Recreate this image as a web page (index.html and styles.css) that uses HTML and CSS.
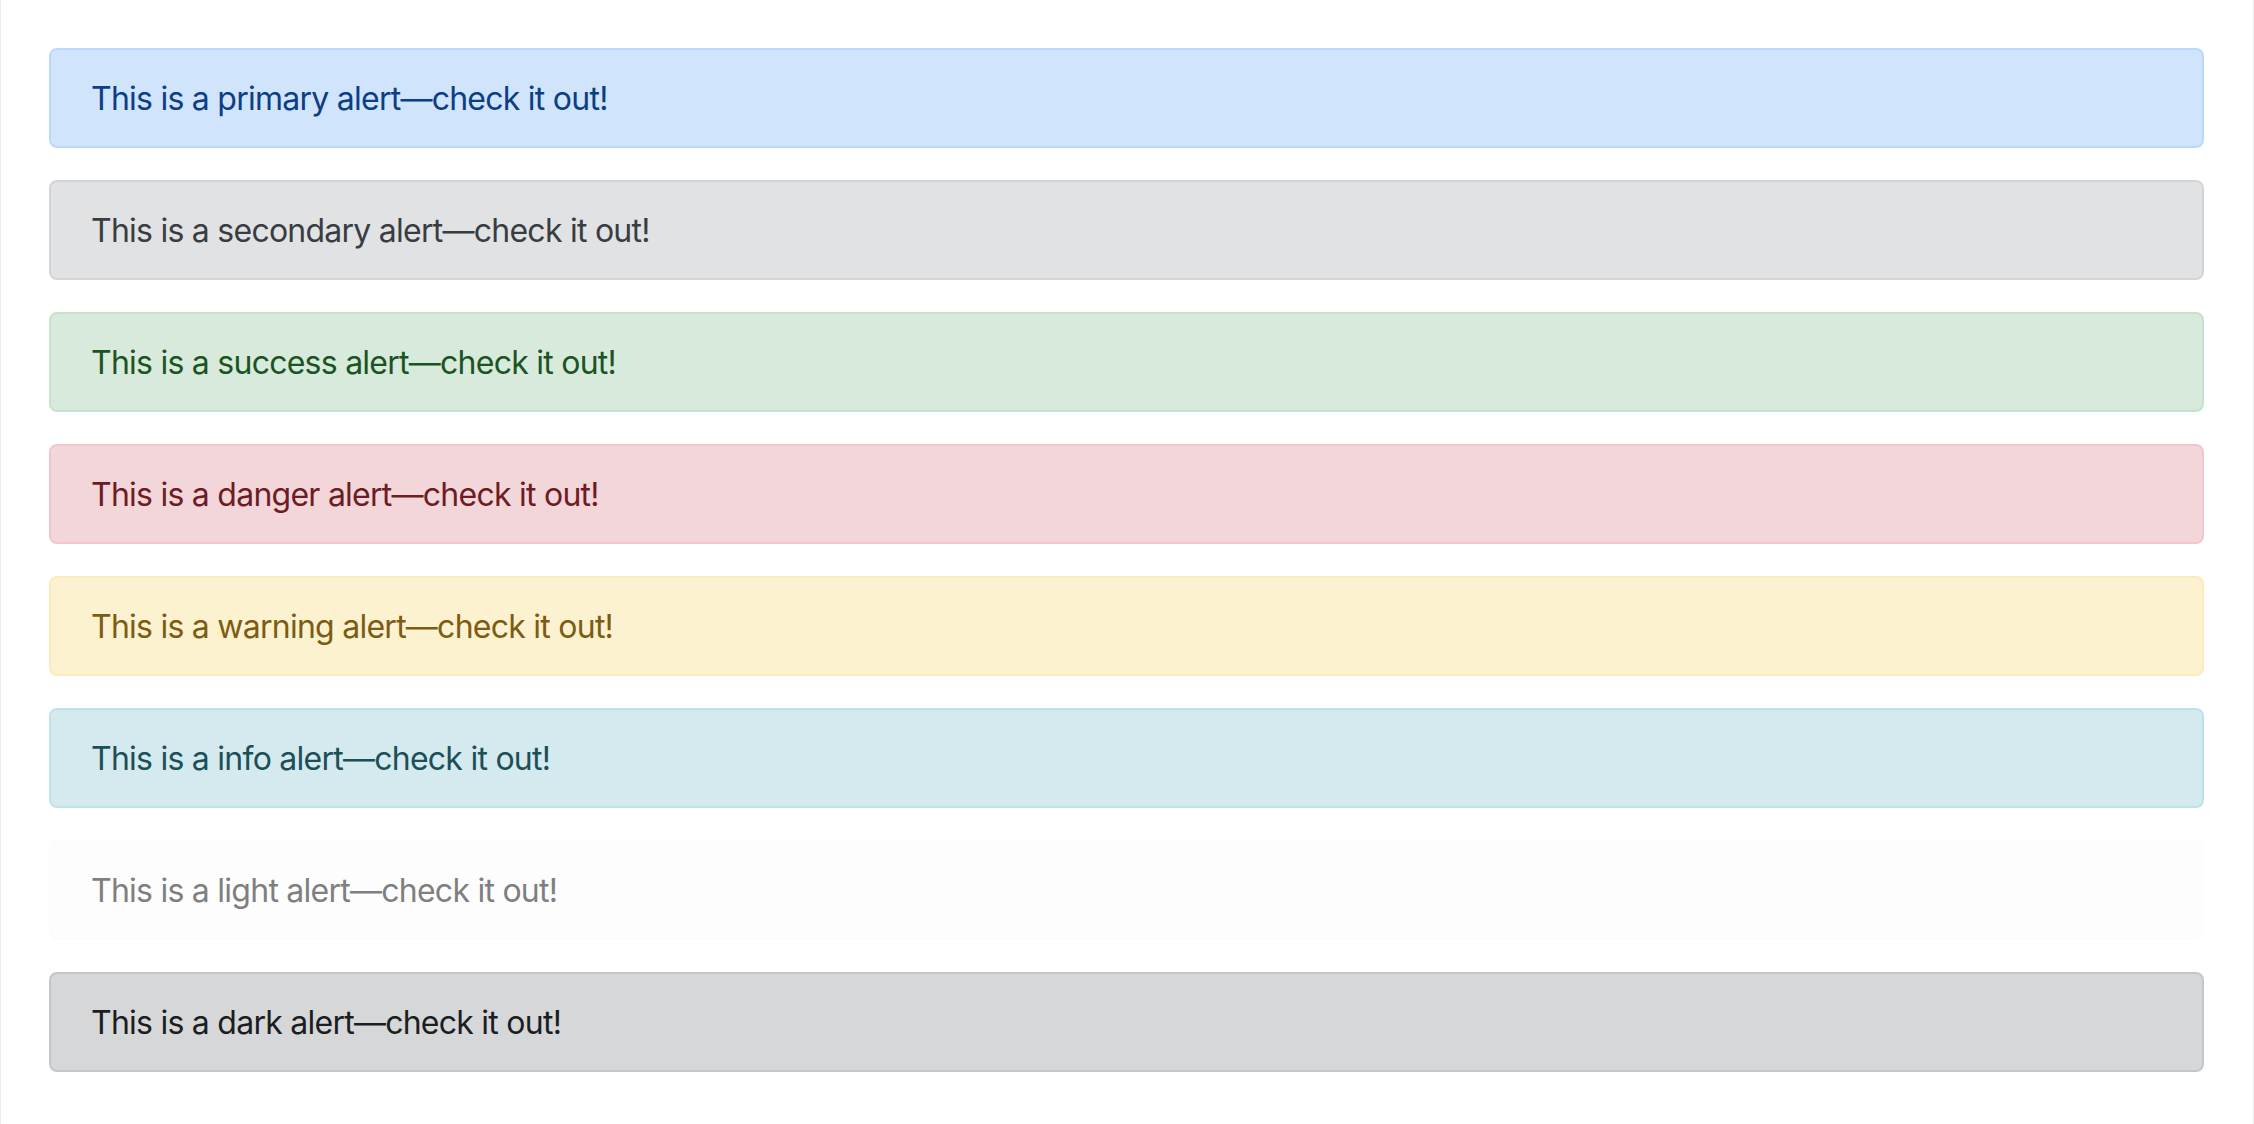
FILE: index.html
```html
<!DOCTYPE html>
<html lang="en">
<head>
<meta charset="utf-8">
<title>Alerts</title>
<link rel="stylesheet" href="styles.css">
</head>
<body>
<div class="frame">
  <div class="alerts">
    <div class="alert alert-primary">This is a primary alert—check it out!</div>
    <div class="alert alert-secondary">This is a secondary alert—check it out!</div>
    <div class="alert alert-success">This is a success alert—check it out!</div>
    <div class="alert alert-danger">This is a danger alert—check it out!</div>
    <div class="alert alert-warning">This is a warning alert—check it out!</div>
    <div class="alert alert-info">This is a info alert—check it out!</div>
    <div class="alert alert-light">This is a light alert—check it out!</div>
    <div class="alert alert-dark">This is a dark alert—check it out!</div>
  </div>
</div>
</body>
</html>
```
FILE: styles.css
```css
html, body {
  margin: 0;
  padding: 0;
  background: #ffffff;
}
body {
  font-family: Inter, "Liberation Sans", Arial, sans-serif;
}
.frame {
  box-sizing: border-box;
  min-height: 1124px;
  border-left: 1px solid #ececec;
  border-right: 1px solid #ececec;
  padding: 48px 49px 0 48px;
}
.alerts {
  display: flex;
  flex-direction: column;
  gap: 32px;
}
.alert {
  padding: 25px 40px 23px;
  border: 2px solid transparent;
  border-radius: 8px;
  font-size: 32px;
  line-height: 48px;
  letter-spacing: -0.75px;
}
.alert-primary { background: #d0e4fc; border-color: #bcd8fa; color: #0b3e84; }
.alert-secondary { background: #e1e2e4; border-color: #d4d5d8; color: #393d42; }
.alert-success { background: #d8eadb; border-color: #c5e3cb; color: #1b5423; }
.alert-danger { background: #f3d6da; border-color: #efc7cc; color: #6e1c24; }
.alert-warning { background: #fcf2d0; border-color: #fbeabb; color: #7c5c12; }
.alert-info { background: #d4eaef; border-color: #c0e1e8; color: #1c4f57; }
.alert-light { background: #fdfdfd; border-color: #fcfcfc; color: #7f7f80; }
.alert-dark { background: #d6d7d9; border-color: #c4c6c8; color: #1b1e21; }
```
